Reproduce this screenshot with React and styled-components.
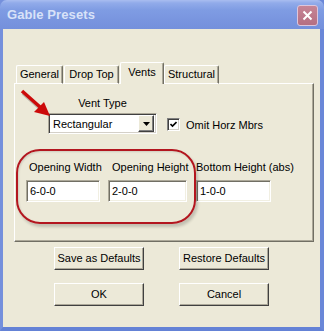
import React from "react";
import styled, { createGlobalStyle } from "styled-components";

const GlobalStyle = createGlobalStyle`
  html, body {
    margin: 0;
    padding: 0;
    background: #ffffff;
  }
  body {
    font-family: "Liberation Sans", Arial, sans-serif;
    font-size: 11px;
    color: #000;
  }
`;

const Window = styled.div`
  position: relative;
  width: 324px;
  height: 331px;
  box-sizing: border-box;
  background: #7a96df;
  border-left: 3px solid #7590dc;
  border-right: 4px solid #6a87d8;
  border-bottom: 4px solid #6482d6;
  display: flex;
  flex-direction: column;
`;

const TitleBar = styled.div`
  height: 29px;
  flex: none;
  margin: 0 -4px 0 -3px;
  padding: 0 6px 0 7px;
  display: flex;
  align-items: center;
  justify-content: space-between;
  background: linear-gradient(
    #a9bdf0 0px,
    #91abea 3px,
    #7f9ce3 10px,
    #7995df 20px,
    #7490dc 29px
  );
  border-radius: 7px 7px 0 0;
`;

const Title = styled.span`
  font-weight: bold;
  font-size: 13px;
  color: #d8e2f8;
  letter-spacing: 0.1px;
`;

const CloseButton = styled.div`
  width: 21px;
  height: 21px;
  box-sizing: border-box;
  border: 1px solid #dcc6dc;
  border-radius: 3px;
  background: linear-gradient(#c68596, #b56f82);
  display: flex;
  align-items: center;
  justify-content: center;
  margin-top: 1px;
`;

const Client = styled.div`
  flex: 1;
  background: #ece9d8;
  padding: 33px 6px 0 11px;
  display: flex;
  flex-direction: column;
`;

const TabRow = styled.div`
  display: flex;
  align-items: flex-end;
  height: 22px;
  padding-left: 2px;
  position: relative;
  z-index: 1;
  margin-bottom: -1px;
`;

const Tab = styled.div`
  box-sizing: border-box;
  height: ${(p) => (p.$active ? 22 : 19)}px;
  width: ${(p) => p.$w}px;
  margin: 0 ${(p) => (p.$active ? 0 : 1)}px 0 0;
  text-align: center;
  line-height: ${(p) => (p.$active ? 18 : 17)}px;
  background: #ece9d8;
  border-top: 1px solid #ffffff;
  border-left: 1px solid #ffffff;
  border-right: 1px solid #716f64;
  border-bottom: ${(p) => (p.$active ? "none" : "1px solid #ffffff")};
  border-radius: 2px 2px 0 0;
  box-shadow: inset -1px 0 0 #aca899;
  white-space: nowrap;
`;

const Panel = styled.div`
  width: 300px;
  height: 159px;
  box-sizing: border-box;
  border-top: 1px solid #ffffff;
  border-left: 1px solid #ffffff;
  border-right: 1px solid #716f64;
  border-bottom: 1px solid #716f64;
  box-shadow: inset -1px -1px 0 #aca899;
  padding: 13px 0 0 33px;
  display: flex;
  flex-direction: column;
`;

const TopRow = styled.div`
  display: flex;
  align-items: flex-end;
  gap: 10px;
`;

const VentGroup = styled.div`
  width: 109px;
  display: flex;
  flex-direction: column;
  align-items: center;
  gap: 3px;
`;

const Label = styled.div`
  line-height: 13px;
  white-space: nowrap;
  padding-left: ${(p) => p.$indent || 0}px;
`;

const Select = styled.div`
  width: 109px;
  height: 21px;
  flex: none;
  box-sizing: border-box;
  border-top: 1px solid #aca899;
  border-left: 1px solid #aca899;
  border-right: 1px solid #ffffff;
  border-bottom: 1px solid #ffffff;
  box-shadow: inset 1px 1px 0 #404040, inset -1px -1px 0 #d4d0c8;
  background: #ffffff;
  display: flex;
  align-items: center;
  padding: 0 2px 0 4px;
`;

const SelectText = styled.span`
  flex: 1;
`;

const DropButton = styled.div`
  width: 16px;
  height: 17px;
  box-sizing: border-box;
  background: #ece9d8;
  border-top: 1px solid #ffffff;
  border-left: 1px solid #ffffff;
  border-right: 1px solid #404040;
  border-bottom: 1px solid #404040;
  box-shadow: inset -1px -1px 0 #808080;
  display: flex;
  align-items: center;
  justify-content: center;
`;

const CheckWrap = styled.label`
  display: flex;
  align-items: center;
  gap: 6px;
  margin-bottom: 3px;
`;

const CheckBox = styled.div`
  width: 13px;
  height: 13px;
  box-sizing: border-box;
  background: #ffffff;
  border-top: 1px solid #808080;
  border-left: 1px solid #808080;
  border-right: 1px solid #ffffff;
  border-bottom: 1px solid #ffffff;
  box-shadow: inset 1px 1px 0 #404040, inset -1px -1px 0 #d4d0c8;
  display: flex;
  align-items: center;
  justify-content: center;
`;

const FieldRow = styled.div`
  display: flex;
  margin: 27px 0 0 -22px;
`;

const Field = styled.div`
  width: ${(p) => p.$w}px;
  margin-right: ${(p) => p.$gap || 0}px;
  display: flex;
  flex-direction: column;
  gap: 6px;
`;

const TextBox = styled.div`
  height: 22px;
  box-sizing: border-box;
  background: #ffffff;
  border-top: 1px solid #aca899;
  border-left: 1px solid #aca899;
  border-right: 1px solid #ffffff;
  border-bottom: 1px solid #ffffff;
  box-shadow: inset 1px 1px 0 #716f64, inset -1px -1px 0 #f1efe2;
  padding: 0 3px;
  line-height: 20px;
`;

const ButtonGrid = styled.div`
  display: grid;
  grid-template-columns: 90px 90px;
  column-gap: 35px;
  row-gap: 13px;
  margin: 5px 0 0 40px;
`;

const Button = styled.div`
  height: 23px;
  box-sizing: border-box;
  background: #ece9d8;
  border-top: 1px solid #ffffff;
  border-left: 1px solid #ffffff;
  border-right: 1px solid #404040;
  border-bottom: 1px solid #404040;
  box-shadow: inset -1px -1px 0 #aca899;
  text-align: center;
  line-height: 21px;
`;

const Highlight = styled.div`
  position: absolute;
  left: 13px;
  top: 149px;
  width: 180px;
  height: 75px;
  box-sizing: border-box;
  border: 2px solid #b3161f;
  border-radius: 24px;
  box-shadow: 2px 3px 3px rgba(0, 0, 0, 0.18),
    inset 1px 1px 2px rgba(0, 0, 0, 0.12);
  pointer-events: none;
`;

const Arrow = styled.svg`
  position: absolute;
  left: 14px;
  top: 88px;
  pointer-events: none;
`;

export default function App() {
  return (
    <>
      <GlobalStyle />
      <Window>
        <TitleBar>
          <Title>Gable Presets</Title>
          <CloseButton>
            <svg width="11" height="11" viewBox="0 0 11 11">
              <path
                d="M1.5 1.5 L9.5 9.5 M9.5 1.5 L1.5 9.5"
                stroke="#ffffff"
                strokeWidth="2"
              />
            </svg>
          </CloseButton>
        </TitleBar>
        <Client>
          <TabRow>
            <Tab $w={47}>General</Tab>
            <Tab $w={55}>Drop Top</Tab>
            <Tab $w={44} $active>
              Vents
            </Tab>
            <Tab $w={55}>Structural</Tab>
          </TabRow>
          <Panel>
            <TopRow>
              <VentGroup>
                <Label>Vent Type</Label>
                <Select>
                  <SelectText>Rectangular</SelectText>
                  <DropButton>
                    <svg width="7" height="4" viewBox="0 0 7 4">
                      <path d="M0 0 H7 L3.5 4 Z" fill="#000" />
                    </svg>
                  </DropButton>
                </Select>
              </VentGroup>
              <CheckWrap>
                <CheckBox>
                  <svg width="7" height="7" viewBox="0 0 7 7">
                    <path
                      d="M0.5 3 L2.5 5 L6.5 1"
                      stroke="#000"
                      strokeWidth="1.6"
                      fill="none"
                    />
                  </svg>
                </CheckBox>
                Omit Horz Mbrs
              </CheckWrap>
            </TopRow>
            <FieldRow>
              <Field $w={74} $gap={8}>
                <Label $indent={3}>Opening Width</Label>
                <TextBox>6-0-0</TextBox>
              </Field>
              <Field $w={79} $gap={9}>
                <Label $indent={4}>Opening Height</Label>
                <TextBox>2-0-0</TextBox>
              </Field>
              <Field $w={75}>
                <Label>Bottom Height (abs)</Label>
                <TextBox>1-0-0</TextBox>
              </Field>
            </FieldRow>
          </Panel>
          <ButtonGrid>
            <Button>Save as Defaults</Button>
            <Button>Restore Defaults</Button>
            <Button>OK</Button>
            <Button>Cancel</Button>
          </ButtonGrid>
        </Client>
        <Highlight />
        <Arrow width="36" height="32" viewBox="0 0 36 32">
          <path d="M6 5 L24 21" stroke="rgba(0,0,0,0.2)" strokeWidth="4" />
          <path d="M5 3 L23 19" stroke="#cc0a0a" strokeWidth="3.5" />
          <path d="M33 28 L17 24 L27 14 Z" fill="#cc0a0a" />
        </Arrow>
      </Window>
    </>
  );
}
